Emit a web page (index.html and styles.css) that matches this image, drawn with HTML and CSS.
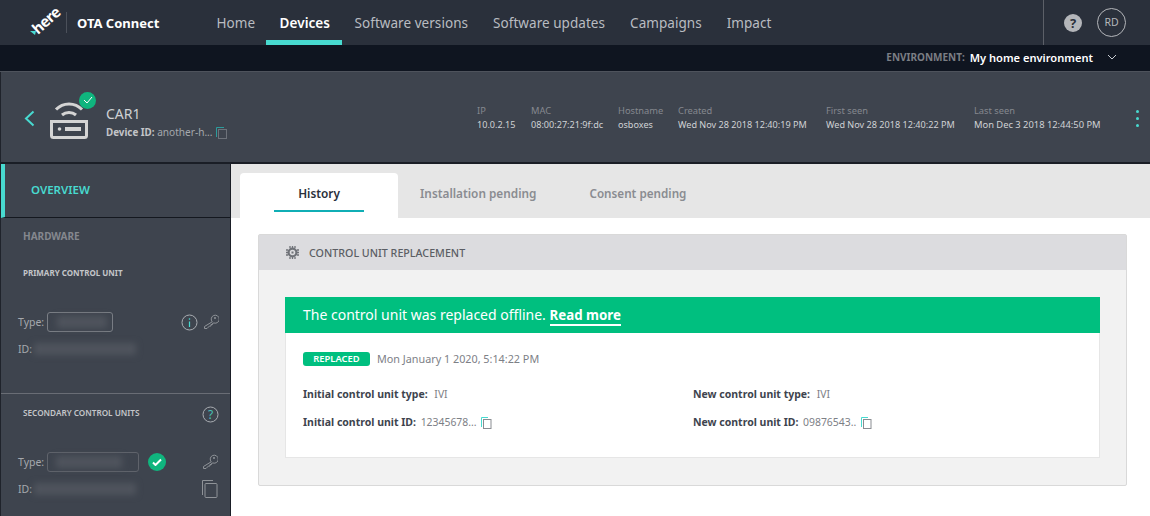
FILE: index.html
```html
<!DOCTYPE html>
<html lang="en">
<head>
  <meta charset="UTF-8">
  <meta name="viewport" content="width=device-width, initial-scale=1.0">
  <title>OTA Connect</title>
  <link rel="stylesheet" href="styles.css">
</head>
<body>
  <header class="topbar">
    <div class="logo">
      <span class="logo-mark"><span class="logo-word">here</span></span>
      <span class="logo-name">OTA Connect</span>
    </div>
    <nav class="nav">
      <a class="nav-link">Home</a>
      <a class="nav-link nav-link-active">Devices</a>
      <a class="nav-link">Software versions</a>
      <a class="nav-link">Software updates</a>
      <a class="nav-link">Campaigns</a>
      <a class="nav-link">Impact</a>
    </nav>
    <div class="user-area">
      <span class="help-icon">?</span>
      <span class="avatar">RD</span>
    </div>
  </header>

  <div class="env-bar">
    <span class="env-label">ENVIRONMENT:</span>
    <span class="env-name">My home environment</span>
    <svg class="env-chevron" width="10" height="6" viewBox="0 0 10 6"><path d="M1 1l4 4 4-4" fill="none" stroke="#c8ccd2" stroke-width="1"/></svg>
  </div>

  <section class="device-bar">
    <svg class="back" width="11" height="17" viewBox="0 0 11 17"><path d="M9.500 1.500L2 8.500l7.500 7" fill="none" stroke="#48dad0" stroke-width="2"/></svg>
    <div class="device-icon">
      <svg width="38" height="39" viewBox="0 0 38 39">
        <path d="M6 9.500C13 2 25 2 32 9.500" fill="none" stroke="#d4d4d4" stroke-width="3"/>
        <path d="M12 15C16 11.500 22 11.500 26 15" fill="none" stroke="#d4d4d4" stroke-width="3"/>
        <path d="M1.500 21.500h35v14a2 2 0 0 1-2 2h-31a2 2 0 0 1-2-2z" fill="none" stroke="#d4d4d4" stroke-width="3"/>
        <circle cx="9.500" cy="29" r="1.800" fill="#d4d4d4"/>
        <rect x="15" y="27" width="16" height="4" fill="#d4d4d4"/>
      </svg>
      <span class="device-badge">
        <svg width="10" height="8" viewBox="0 0 10 8"><path d="M1 4l3 3 5-6" fill="none" stroke="#fff" stroke-width="1"/></svg>
      </span>
    </div>
    <div class="device-title">
      <div class="device-name">CAR1</div>
      <div class="device-id"><b>Device ID:</b> another-h...
        <svg class="copy copy-device" width="11" height="12" viewBox="0 0 11 12"><path d="M.5 10V.5H8" fill="none" stroke="#2c9c9c"/><rect x="2.500" y="2.500" width="8" height="9" fill="none" stroke="#6d727a"/></svg>
      </div>
    </div>
    <dl class="meta">
      <div class="meta-item meta-ip"><dt>IP</dt><dd>10.0.2.15</dd></div>
      <div class="meta-item meta-mac"><dt>MAC</dt><dd>08:00:27:21:9f:dc</dd></div>
      <div class="meta-item meta-host"><dt>Hostname</dt><dd>osboxes</dd></div>
      <div class="meta-item meta-date"><dt>Created</dt><dd>Wed Nov 28 2018 12:40:19 PM</dd></div>
      <div class="meta-item meta-date"><dt>First seen</dt><dd>Wed Nov 28 2018 12:40:22 PM</dd></div>
      <div class="meta-item meta-last"><dt>Last seen</dt><dd>Mon Dec 3 2018 12:44:50 PM</dd></div>
    </dl>
    <div class="dots"><i></i><i></i><i></i></div>
  </section>

  <main class="layout">
    <aside class="sidebar">
      <div class="side-overview">OVERVIEW</div>
      <div class="side-primary">
        <div class="side-hardware">HARDWARE</div>
        <div class="side-heading">PRIMARY CONTROL UNIT</div>
        <div class="side-row side-row-type">
          <span class="side-label">Type:</span>
          <span class="type-box"><span class="blur blur-type"></span></span>
          <span class="side-icons">
            <svg width="17" height="17" viewBox="0 0 17 17"><circle cx="8.500" cy="8.500" r="7.500" fill="none" stroke="#a9adb2"/><path d="M8.500 7.500v5.500" stroke="#48dad0" stroke-width="1.200"/><circle cx="8.500" cy="5" r=".8" fill="#48dad0"/></svg>
            <svg width="16" height="16" viewBox="0 0 16 16"><path d="M9.200 7.800a4 4 0 1 1 1.800 1.200l-1.500.3v1.200H8v1.500H6.500L4 14.500H1.500V12.500z" fill="none" stroke="#8f9398"/><circle cx="12" cy="4" r="1" fill="#8f9398"/></svg>
          </span>
        </div>
        <div class="side-row side-row-id">
          <span class="side-label">ID:</span>
          <span class="blur blur-id"></span>
        </div>
      </div>
      <div class="side-secondary">
        <div class="side-heading-row">
          <span class="side-heading">SECONDARY CONTROL UNITS</span>
          <svg width="17" height="17" viewBox="0 0 17 17"><circle cx="8.500" cy="8.500" r="7.500" fill="none" stroke="#a9adb2"/><text x="8.500" y="12.500" text-anchor="middle" class="help-glyph">?</text></svg>
        </div>
        <div class="side-row side-row-type2">
          <span class="side-label">Type:</span>
          <span class="type-box type-box-wide"><span class="blur blur-type2"></span></span>
          <span class="ok-badge"><svg width="10" height="8" viewBox="0 0 10 8"><path d="M1 4.500l2.500 2.500L9 1.500" fill="none" stroke="#fff" stroke-width="2"/></svg></span>
          <span class="side-icons side-icons-right">
            <svg width="16" height="16" viewBox="0 0 16 16"><path d="M9.200 7.800a4 4 0 1 1 1.800 1.200l-1.500.3v1.200H8v1.500H6.500L4 14.500H1.500V12.500z" fill="none" stroke="#8f9398"/><circle cx="12" cy="4" r="1" fill="#8f9398"/></svg>
          </span>
        </div>
        <div class="side-row side-row-id2">
          <span class="side-label">ID:</span>
          <span class="blur blur-id"></span>
          <svg class="side-copy" width="16" height="18" viewBox="0 0 16 18"><path d="M.5 15V.5H11" fill="none" stroke="#8f9398"/><rect x="3" y="3.500" width="12" height="14" rx="1" fill="none" stroke="#8f9398"/></svg>
        </div>
      </div>
    </aside>

    <div class="content">
      <div class="tabs">
        <div class="tab tab-active"><span class="tab-text">History</span></div>
        <div class="tab tab-install">Installation pending</div>
        <div class="tab tab-consent">Consent pending</div>
      </div>

      <section class="card">
        <div class="card-head">
          <svg width="13" height="13" viewBox="0 0 13 13">
            <circle cx="6.500" cy="6.500" r="3.900" fill="none" stroke="#6f7278" stroke-width="2.200"/>
            <rect x="5.500" y="5.500" width="2" height="2" fill="#6f7278"/>
            <path d="M4 0v2M6.500 0v2M9 0v2M4 11v2M6.500 11v2M9 11v2M0 4h2M0 6.500h2M0 9h2M11 4h2M11 6.500h2M11 9h2" stroke="#6f7278" stroke-width="1.300"/>
          </svg>
          <span>CONTROL UNIT REPLACEMENT</span>
        </div>
        <div class="card-body">
          <div class="alert">The control unit was replaced offline. <a class="alert-link">Read more</a></div>
          <div class="panel">
            <div class="status-row">
              <span class="status-badge">REPLACED</span>
              <span class="status-date">Mon January 1 2020, 5:14:22 PM</span>
            </div>
            <div class="details">
              <div class="detail detail-type"><b>Initial control unit type:</b> <span>IVI</span></div>
              <div class="detail detail-type"><b>New control unit type:</b> <span>IVI</span></div>
              <div class="detail"><b>Initial control unit ID:</b> <span>12345678...</span>
                <svg class="copy copy-detail" width="11" height="12" viewBox="0 0 11 12"><path d="M.5 10V.5H7" fill="none" stroke="#48dad0"/><rect x="2.500" y="2.500" width="7.500" height="9" fill="none" stroke="#8a8d92"/></svg>
              </div>
              <div class="detail"><b>New control unit ID:</b> <span>09876543..</span>
                <svg class="copy copy-detail" width="11" height="12" viewBox="0 0 11 12"><path d="M.5 10V.5H7" fill="none" stroke="#48dad0"/><rect x="2.500" y="2.500" width="7.500" height="9" fill="none" stroke="#8a8d92"/></svg>
              </div>
            </div>
          </div>
        </div>
      </section>
    </div>
  </main>
</body>
</html>
```

FILE: styles.css
```css
* {
  box-sizing: border-box;
}

html, body {
  height: 516px;
  overflow: hidden;
}

body {
  margin: 0;
  font-family: "Noto Sans", "Open Sans", sans-serif;
  background-color: #fff;
}

.topbar {
  display: flex;
  height: 45px;
  padding-left: 30px;
  background-color: #2a303b;
}

.logo {
  display: flex;
  align-items: center;
  width: 174px;
}

.logo-mark {
  display: block;
  width: 37px;
  height: 21px;
  border-right: 1px solid #4b505a;
  margin-right: 10px;
  position: relative;
}

.logo-mark::before {
  content: "";
  position: absolute;
  left: 0;
  top: 19px;
  border-top: 4px solid #48dad0;
  border-left: 5px solid transparent;
  border-right: 1px solid transparent;
}

.logo-word {
  position: absolute;
  left: 0;
  top: -1px;
  color: #fff;
  font-size: 15px;
  font-weight: 700;
  line-height: 18px;
  letter-spacing: -0.7px;
  transform: rotate(-42deg);
}

.logo-name {
  color: #fff;
  font-size: 13px;
  font-weight: 700;
  white-space: nowrap;
}

.nav {
  display: flex;
}

.nav-link {
  display: flex;
  align-items: center;
  height: 45px;
  padding: 0 12.500px;
  color: #b9bcc1;
  font-size: 13.500px;
  letter-spacing: 0.05px;
  white-space: nowrap;
}

.nav-link-active {
  margin-left: -2px;
  padding: 5px 12px 0 14px;
  color: #fff;
  font-weight: 600;
  border-bottom: 5px solid #48dad0;
}

.user-area {
  display: flex;
  align-items: center;
  position: absolute;
  left: 1043px;
  top: 0;
  width: 107px;
  height: 45px;
  border-left: 1px solid #5c6068;
}

.help-icon {
  width: 18px;
  height: 18px;
  margin-left: 20px;
  border-radius: 50%;
  background-color: #b4b6ba;
  color: #2a303b;
  font-size: 13px;
  font-weight: 700;
  line-height: 18px;
  text-align: center;
}

.avatar {
  width: 29px;
  height: 29px;
  margin-left: 15px;
  border: 1px solid #b4b6ba;
  border-radius: 50%;
  color: #b4b6ba;
  font-size: 10.500px;
  line-height: 27px;
  text-align: center;
}

.env-bar {
  display: flex;
  align-items: center;
  justify-content: flex-end;
  height: 27px;
  padding: 0 33px 2px 0;
  background-color: #0f1520;
  border-bottom: 1px solid #4e535c;
  font-weight: 700;
}

.env-label {
  color: #7b7e84;
  font-size: 10px;
}

.env-name {
  margin-left: 5px;
  color: #fff;
  font-size: 11.100px;
  font-weight: 600;
}

.env-chevron {
  margin-left: 14px;
}

.device-bar {
  display: flex;
  align-items: center;
  height: 92px;
  padding-left: 23px;
  background-color: #3e444e;
  border-bottom: 2px solid #1a1e26;
  border-left: 1px solid #1f232b;
}

.back {
  margin-top: 2px;
}

.device-icon {
  position: relative;
  width: 38px;
  height: 39px;
  margin: 4px 18px 0 15px;
}

.device-badge {
  position: absolute;
  right: -8px;
  top: -8px;
  display: flex;
  align-items: center;
  justify-content: center;
  width: 17px;
  height: 17px;
  border-radius: 50%;
  background-color: #10b57e;
}

.device-title {
  width: 371px;
  margin-top: 13px;
}

.device-name {
  color: #cfd1d4;
  font-size: 14px;
  line-height: 18px;
}

.device-id {
  color: #a5a8ad;
  font-size: 10.100px;
  line-height: 18px;
}

.device-id b {
  color: #c3c5c8;
  font-size: 9.800px;
}

.copy {
  vertical-align: -3px;
}

.copy-device {
  margin-left: 1px;
}

.meta {
  display: flex;
  margin: 2px 0 0;
}

.meta-item {
  width: 54px;
  white-space: nowrap;
}

.meta-mac {
  width: 87px;
}

.meta-host {
  width: 60px;
}

.meta-date {
  width: 148px;
}

.meta dt {
  color: #85888e;
  font-size: 9.300px;
  line-height: 14px;
}

.meta dd {
  margin: 0;
  color: #d0d2d5;
  font-size: 9.100px;
  line-height: 14px;
}

.meta-last dd {
  font-size: 9.350px;
}

.dots {
  display: flex;
  flex-direction: column;
  gap: 4px;
  position: absolute;
  left: 1136px;
  top: 110px;
}

.dots i {
  display: block;
  width: 3px;
  height: 3px;
  background-color: #48dad0;
  border-radius: 50%;
}

.layout {
  display: flex;
  height: 352px;
}

.sidebar {
  flex: none;
  width: 231px;
  background-color: #3e444e;
  border-left: 1px solid #1f232b;
  border-right: 1px solid #1a1e26;
}

.side-overview {
  height: 54px;
  padding-left: 26px;
  border-left: 4px solid #48dad0;
  border-bottom: 1px solid #14181f;
  color: #48dad0;
  font-size: 11.500px;
  font-weight: 600;
  line-height: 52px;
}

.side-primary {
  height: 176px;
  border-bottom: 1px solid #696d75;
}

.side-hardware {
  padding: 11px 0 0 22px;
  color: #85888e;
  font-size: 10px;
  font-weight: 700;
  line-height: 14px;
}

.side-heading {
  color: #c4c6c9;
  font-size: 8px;
  font-weight: 700;
  line-height: 14px;
  white-space: nowrap;
}

.side-primary .side-heading {
  padding: 23px 0 0 22px;
}

.side-row {
  display: flex;
  align-items: center;
  height: 20px;
  padding-left: 17px;
}

.side-row-type {
  margin-top: 32px;
}

.side-row-id {
  margin-top: 7px;
}

.side-label {
  width: 29px;
  flex: none;
  color: #a5a8ad;
  font-size: 10.500px;
}

.side-row-id .side-label,
.side-row-id2 .side-label {
  width: 16px;
}

.type-box {
  display: flex;
  align-items: center;
  width: 66px;
  height: 20px;
  padding-left: 9px;
  border: 1px solid #7a7e85;
  border-radius: 3px;
}

.type-box-wide {
  width: 92px;
  border-color: #5f636b;
  padding-left: 8px;
}

.blur {
  display: block;
  height: 12px;
  background-color: #4f545d;
  filter: blur(3px);
}

.blur-type {
  width: 50px;
}

.blur-type2 {
  width: 66px;
}

.blur-id {
  width: 102px;
}

.side-icons {
  display: flex;
  align-items: center;
  gap: 5px;
  margin-left: 68px;
}

.side-heading-row {
  display: flex;
  align-items: center;
  justify-content: space-between;
  padding: 12px 11px 0 22px;
}

.side-heading-row .side-heading {
  margin-top: -3px;
  font-weight: 600;
  font-size: 8.200px;
}

.help-glyph {
  fill: #48c0b8;
  font-size: 12px;
}

.side-row-type2 {
  margin-top: 29px;
}

.ok-badge {
  display: flex;
  align-items: center;
  justify-content: center;
  width: 18px;
  height: 18px;
  margin-left: 9px;
  border-radius: 50%;
  background-color: #10b57e;
}

.side-icons-right {
  margin-left: 36px;
}

.side-row-id2 {
  margin-top: 7px;
}

.side-copy {
  margin-left: 66px;
}

.content {
  flex: 1;
  min-width: 0;
}

.tabs {
  display: flex;
  height: 54px;
  padding: 9px 0 0 9px;
  background-color: #e6e6e6;
}

.tab {
  color: #8a8c91;
  font-size: 11.800px;
  font-weight: 600;
  line-height: 40px;
  white-space: nowrap;
}

.tab-active {
  width: 158px;
  background-color: #fff;
  border-radius: 4px 4px 0 0;
  color: #2a303b;
  text-align: center;
}

.tab-text {
  display: block;
  width: 90px;
  height: 39px;
  margin: 0 auto;
  border-bottom: 2px solid #10aeb5;
}

.tab-install {
  margin-left: 22px;
}

.tab-consent {
  margin-left: 53px;
  font-size: 11.700px;
}

.card {
  width: 869px;
  height: 252px;
  margin: 16px 0 0 27px;
  background-color: #f2f2f2;
  border: 1px solid #d9d9d9;
  border-radius: 2px;
}

.card-head {
  display: flex;
  align-items: center;
  gap: 10px;
  height: 35px;
  padding-left: 27px;
  background-color: #dcdcdf;
  color: #5b5e64;
  font-size: 10.700px;
  font-weight: 500;
}

.card-body {
  padding: 27px 26px 0;
}

.alert {
  height: 36px;
  padding-left: 18px;
  background-color: #00bf7f;
  color: #fff;
  font-size: 14px;
  line-height: 36px;
}

.alert-link {
  font-size: 13.300px;
  font-weight: 700;
  border-bottom: 2px solid #fff;
}

.panel {
  height: 125px;
  padding: 18px 17px 0;
  background-color: #fff;
  border: 1px solid #e6e6e6;
  border-top: none;
}

.status-row {
  display: flex;
  align-items: center;
  gap: 7px;
}

.status-badge {
  width: 67px;
  height: 14px;
  background-color: #00bf7f;
  border-radius: 3px;
  color: #fff;
  font-size: 9.400px;
  font-weight: 600;
  line-height: 14px;
  text-align: center;
}

.status-date {
  color: #7d8086;
  font-size: 10.800px;
}

.details {
  display: grid;
  grid-template-columns: 390px 1fr;
  row-gap: 12px;
  margin-top: 20px;
}

.detail {
  color: #7d8086;
  font-size: 10.400px;
  line-height: 16px;
  white-space: nowrap;
}

.detail b {
  margin-right: 2px;
  color: #3e444e;
  font-size: 10.500px;
  font-weight: 700;
}

.detail-type b {
  margin-right: 4px;
}

.copy-detail {
  margin-left: 2px;
}
```
